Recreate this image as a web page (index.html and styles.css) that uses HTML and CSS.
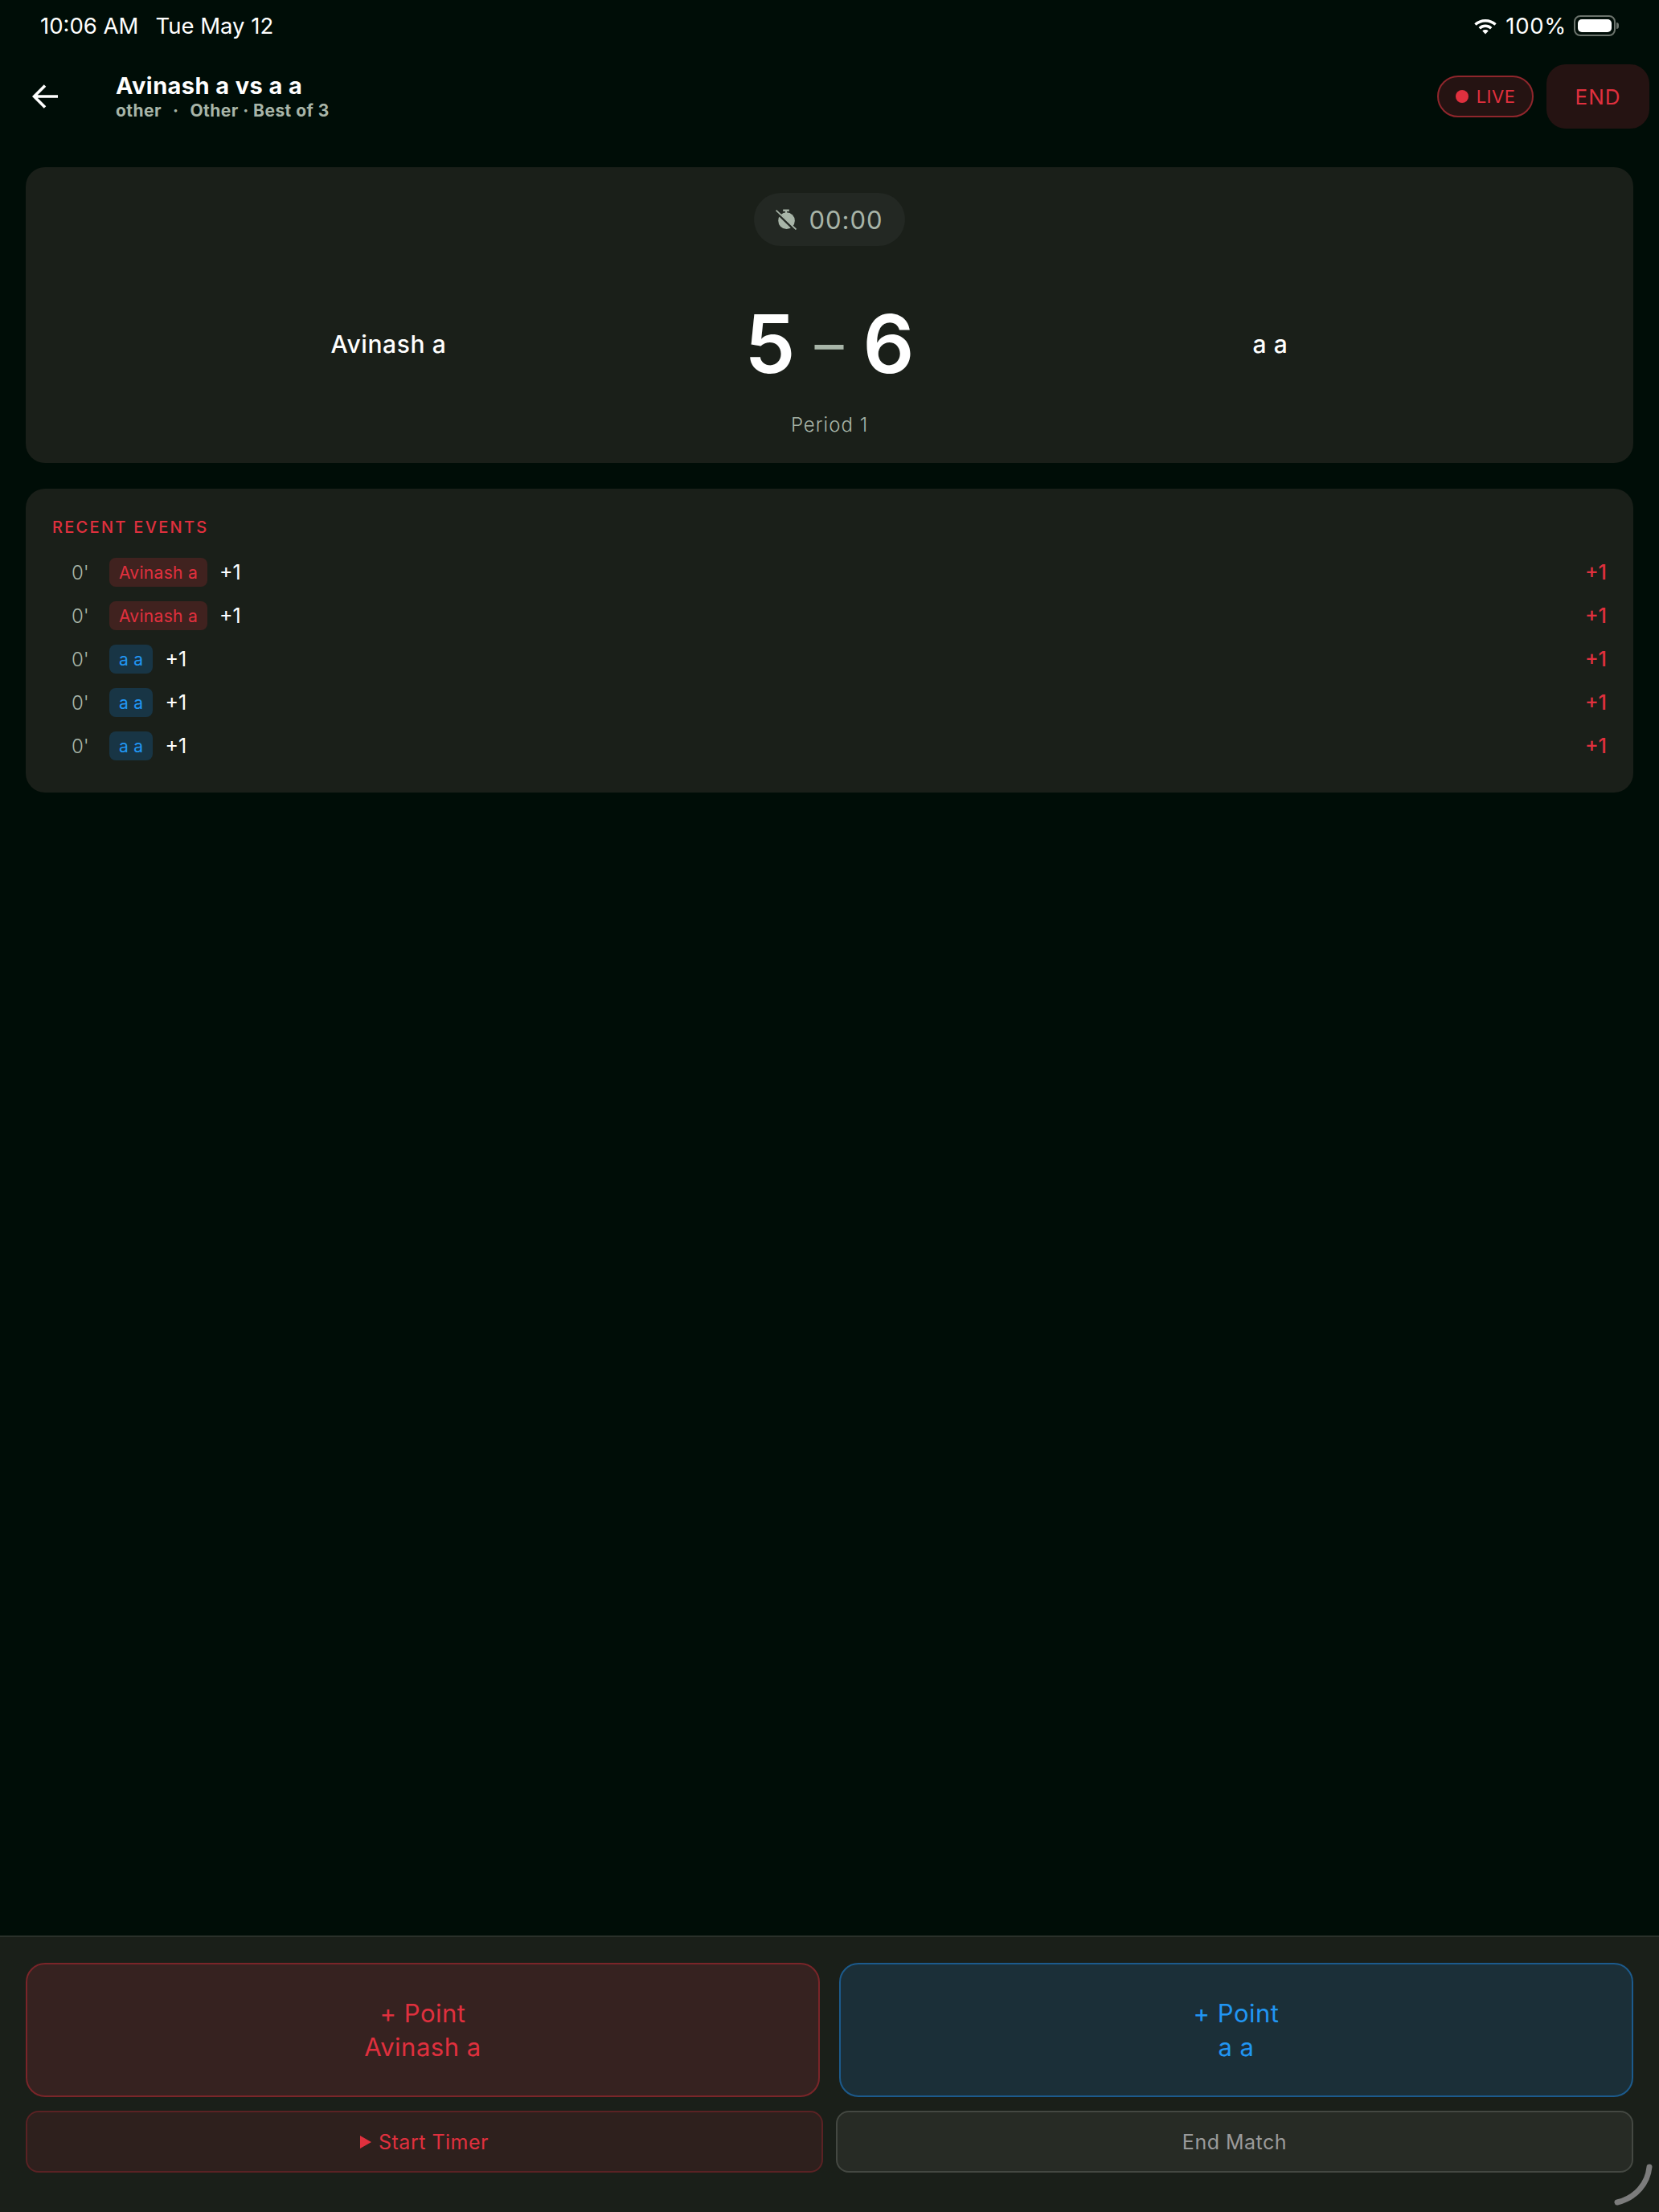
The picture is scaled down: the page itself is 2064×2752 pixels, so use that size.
FILE: index.html
```html
<!DOCTYPE html>
<html lang="en">
<head>
    <meta charset="UTF-8">
    <meta name="viewport" content="width=device-width, initial-scale=1.0">
    <title>Avinash a vs a a</title>
    <link rel="stylesheet" href="styles.css">
</head>
<body>
    <div class="status-bar">
        <div class="status-left">
            <span class="clock">10:06 AM</span>
            <span>Tue May 12</span>
        </div>
        <div class="status-right">
            <svg class="wifi" viewBox="0 0 30 22">
                <path d="M15 3C9.6 3 4.9 5 1.3 8.3L3.6 10.8C6.6 8 10.6 6.4 15 6.4S23.4 8 26.4 10.8L28.7 8.3C25.1 5 20.4 3 15 3Z"/>
                <path d="M15 9.6C11.8 9.6 8.8 10.8 6.6 12.9L9 15.4C10.6 13.9 12.7 13 15 13S19.4 13.9 21 15.4L23.4 12.9C21.2 10.8 18.2 9.6 15 9.6Z"/>
                <path d="M15 16C13.6 16 12.3 16.5 11.3 17.4L15 21.4 18.7 17.4C17.7 16.5 16.4 16 15 16Z"/>
            </svg>
            <span>100%</span>
            <div class="battery"><div class="battery-fill"></div></div>
            <div class="battery-cap"></div>
        </div>
    </div>

    <header class="header">
        <svg class="back" viewBox="0 0 34 32">
            <path d="M32 16H3M16 2.5L2.5 16L16 29.5"/>
        </svg>
        <div class="match-info">
            <div class="match-title">Avinash a vs a a</div>
            <div class="match-sub"><span class="sport">other</span><span>·</span><span>Other · Best of 3</span></div>
        </div>
        <div class="live-pill"><span class="live-dot"></span>LIVE</div>
        <button class="end-btn">END</button>
    </header>

    <main class="content">
        <section class="card score-card">
            <div class="timer-pill">
                <svg class="timer-icon" viewBox="0 0 24 24">
                    <rect x="8.5" y="0.5" width="7" height="2.2"/>
                    <rect x="11" y="2.5" width="2" height="3"/>
                    <circle cx="12.5" cy="13.5" r="9.5"/>
                    <path class="slash-gap" d="M0 2.5L22 24"/>
                    <path class="slash" d="M0.5 1.5L23.5 23.5"/>
                </svg>
                <span>00:00</span>
            </div>
            <div class="score-row">
                <div class="team">Avinash a</div>
                <div class="score">
                    <span>5</span>
                    <span class="score-dash">–</span>
                    <span>6</span>
                </div>
                <div class="team">a a</div>
            </div>
            <div class="period">Period 1</div>
        </section>

        <section class="card events-card">
            <h2 class="events-title">RECENT EVENTS</h2>
            <div class="event">
                <span class="event-time">0'</span>
                <span class="chip chip-red">Avinash a</span>
                <span class="event-label">+1</span>
                <span class="event-points">+1</span>
            </div>
            <div class="event">
                <span class="event-time">0'</span>
                <span class="chip chip-red">Avinash a</span>
                <span class="event-label">+1</span>
                <span class="event-points">+1</span>
            </div>
            <div class="event">
                <span class="event-time">0'</span>
                <span class="chip chip-blue">a a</span>
                <span class="event-label">+1</span>
                <span class="event-points">+1</span>
            </div>
            <div class="event">
                <span class="event-time">0'</span>
                <span class="chip chip-blue">a a</span>
                <span class="event-label">+1</span>
                <span class="event-points">+1</span>
            </div>
            <div class="event">
                <span class="event-time">0'</span>
                <span class="chip chip-blue">a a</span>
                <span class="event-label">+1</span>
                <span class="event-points">+1</span>
            </div>
        </section>
    </main>

    <footer class="controls">
        <div class="point-row">
            <button class="point-btn point-red">+ Point<br>Avinash a</button>
            <button class="point-btn point-blue">+ Point<br>a a</button>
        </div>
        <div class="action-row">
            <button class="action-btn action-timer"><span class="play"></span>Start Timer</button>
            <button class="action-btn action-end">End Match</button>
        </div>
    </footer>

    <svg class="resize-arc" viewBox="0 0 52 52">
        <path d="M46 4C44 24 30 42 6 48"/>
    </svg>
</body>
</html>
```

FILE: styles.css
```css
:root {
    --bg: #000d07;
    --card: #1a1f19;
    --pill: #232823;
    --muted: #a8b5a8;
    --red: #e0303e;
    --blue: #2196f3;
}

* {
    box-sizing: border-box;
}

body {
    position: relative;
    font-family: "Inter", "Open Sans", sans-serif;
    background: var(--bg);
    color: #fff;
    margin: 0;
    width: 2064px;
    height: 2752px;
    overflow: hidden;
    display: flex;
    flex-direction: column;
}

button {
    font-family: inherit;
    cursor: pointer;
}

/* Status bar */
.status-bar {
    height: 64px;
    padding: 0 50px 0 50px;
    display: flex;
    justify-content: space-between;
    align-items: center;
    font-size: 27.5px;
    flex-shrink: 0;
}

.status-left {
    display: flex;
    gap: 21px;
}

.status-right {
    display: flex;
    align-items: center;
    letter-spacing: 0.7px;
}

.wifi {
    width: 30px;
    height: 22px;
    margin-right: 10px;
    fill: #fff;
}

.battery {
    width: 52px;
    height: 26px;
    margin-left: 9px;
    padding: 3px;
    border: 2px solid #6b736c;
    border-radius: 8px;
}

.battery-fill {
    height: 100%;
    background: #fff;
    border-radius: 5px;
}

.battery-cap {
    width: 3px;
    height: 8px;
    margin-left: 1px;
    background: #6b736c;
    border-radius: 0 3px 3px 0;
}

/* Header */
.header {
    height: 112px;
    padding: 0 12px 0 40px;
    display: flex;
    align-items: center;
    flex-shrink: 0;
}

.back {
    width: 34px;
    height: 32px;
    fill: none;
    stroke: #fff;
    stroke-width: 3.6;
    margin-right: 70px;
}

.match-info {
    flex: 1;
}

.match-title {
    font-size: 29px;
    font-weight: 700;
    line-height: 34px;
    letter-spacing: 0.4px;
}

.match-sub {
    display: flex;
    gap: 14px;
    margin-top: 1px;
    font-size: 21px;
    font-weight: 700;
    line-height: 26px;
    letter-spacing: 0.45px;
    color: var(--muted);
}

.live-pill {
    width: 120px;
    height: 52px;
    display: flex;
    align-items: center;
    justify-content: center;
    gap: 10px;
    font-size: 22px;
    letter-spacing: 0.5px;
    color: var(--red);
    background: #251312;
    border: 2px solid #8f262c;
    border-radius: 26px;
    margin-right: 16px;
}

.live-dot {
    width: 16px;
    height: 16px;
    border-radius: 50%;
    background: var(--red);
}

.end-btn {
    width: 128px;
    height: 80px;
    font-size: 26px;
    letter-spacing: 1px;
    color: var(--red);
    background: #251312;
    border: none;
    border-radius: 24px;
}

/* Cards */
.content {
    flex: 1;
    padding: 32px 32px 0;
}

.card {
    background: var(--card);
    border-radius: 24px;
}

.score-card {
    height: 368px;
    padding: 32px;
    margin-bottom: 32px;
    display: flex;
    flex-direction: column;
    align-items: center;
}

.timer-pill {
    width: 188px;
    height: 66px;
    display: flex;
    align-items: center;
    justify-content: center;
    gap: 15px;
    font-size: 31px;
    letter-spacing: 1px;
    color: var(--muted);
    background: var(--pill);
    border-radius: 33px;
}

.timer-icon {
    width: 26px;
    height: 26px;
    fill: var(--muted);
}

.slash-gap {
    fill: none;
    stroke: var(--pill);
    stroke-width: 3.2;
}

.slash {
    fill: none;
    stroke: var(--muted);
    stroke-width: 1.6;
}

.score-row {
    width: 100%;
    margin-top: 62px;
    height: 120px;
    display: flex;
    align-items: center;
}

.team {
    flex: 1;
    text-align: center;
    font-size: 30px;
    font-weight: 500;
    letter-spacing: 0.6px;
}

.score {
    width: 258px;
    display: flex;
    justify-content: center;
    align-items: center;
    gap: 24px;
    font-size: 100px;
    font-weight: 600;
    line-height: 120px;
}

.score-dash {
    font-size: 72px;
    font-weight: 400;
    color: var(--muted);
}

.period {
    margin-top: 26px;
    font-size: 24px;
    font-weight: 300;
    letter-spacing: 1px;
    color: var(--muted);
}

.events-card {
    height: 378px;
    padding: 35px 32px 0 33px;
}

.events-title {
    margin: 0 0 16px;
    font-size: 20px;
    font-weight: 500;
    line-height: 26px;
    letter-spacing: 2.3px;
    color: var(--red);
}

.event {
    height: 54px;
    display: flex;
    align-items: center;
}

.event-time {
    width: 71px;
    padding-left: 24px;
    font-size: 24px;
    font-weight: 300;
    color: var(--muted);
}

.chip {
    height: 36px;
    padding: 0 12px;
    display: flex;
    align-items: center;
    font-size: 21px;
    letter-spacing: 0.3px;
    border-radius: 8px;
}

.chip-red {
    color: var(--red);
    background: #40221f;
}

.chip-blue {
    color: var(--blue);
    background: #183545;
}

.event-label {
    flex: 1;
    margin-left: 15px;
    font-size: 25px;
}

.event-points {
    margin-right: 1px;
    font-size: 25px;
    font-weight: 500;
    color: var(--red);
}

/* Bottom controls */
.controls {
    height: 344px;
    padding: 32px 32px 0;
    background: var(--card);
    border-top: 2px solid #2a302a;
    flex-shrink: 0;
}

.point-row {
    display: flex;
    gap: 24px;
    margin-bottom: 17px;
}

.point-btn {
    flex: 1;
    height: 167px;
    font-size: 31px;
    line-height: 42px;
    letter-spacing: 0.5px;
    border-radius: 24px;
    border-width: 2px;
    border-style: solid;
}

.point-red {
    color: var(--red);
    background: #362220;
    border-color: #7a2529;
}

.point-blue {
    color: var(--blue);
    background: #1b2f38;
    border-color: #1c5a8c;
}

.action-row {
    display: flex;
    gap: 16px;
}

.action-btn {
    flex: 1;
    height: 77px;
    font-size: 25px;
    letter-spacing: 0.5px;
    border-radius: 16px;
    border-width: 2px;
    border-style: solid;
    display: flex;
    align-items: center;
    justify-content: center;
}

.action-timer {
    color: var(--red);
    background: #2e201d;
    border-color: #5a2224;
}

.play {
    width: 0;
    height: 0;
    margin-right: 9px;
    border-left: 14px solid var(--red);
    border-top: 8px solid transparent;
    border-bottom: 8px solid transparent;
}

.action-end {
    color: #9a9a9a;
    background: #272b25;
    border-color: #444842;
}

/* Window resize handle in the corner */
.resize-arc {
    position: absolute;
    right: 6px;
    bottom: 8px;
    width: 52px;
    height: 52px;
    fill: none;
    stroke: #7c7c7c;
    stroke-width: 7;
    stroke-linecap: round;
}
```
